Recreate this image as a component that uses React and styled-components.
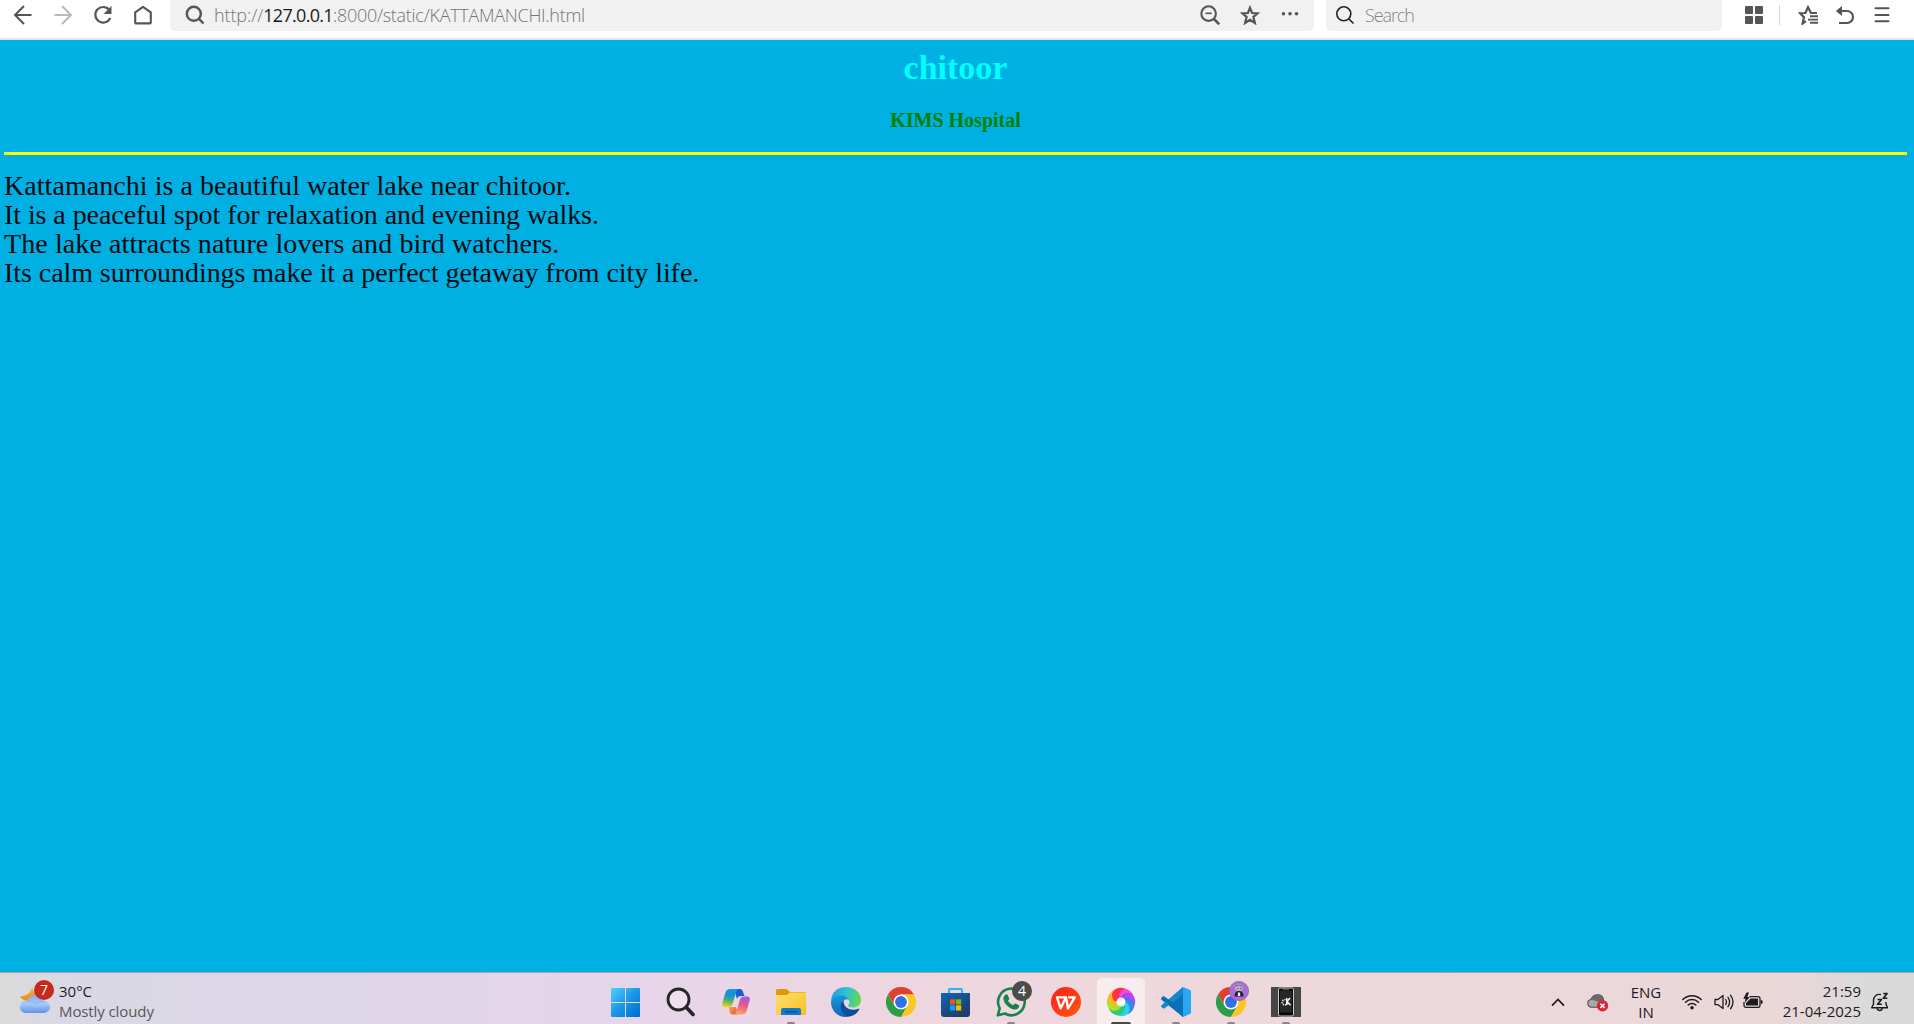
import React from "react";
import styled, { createGlobalStyle } from "styled-components";

const GlobalStyle = createGlobalStyle`
  * { box-sizing: border-box; }
  html, body { margin: 0; padding: 0; }
  body { overflow: hidden; font-family: "Open Sans", "Noto Sans", sans-serif; }
  svg { display: block; flex: none; }
`;

const Screen = styled.div`
  width: 1914px;
  height: 1024px;
  display: flex;
  flex-direction: column;
  overflow: hidden;
`;

/* Browser toolbar */
const Toolbar = styled.header`
  height: 40px;
  flex: none;
  display: flex;
  align-items: flex-start;
  padding-left: 3px;
  background: #fff;
  border-bottom: 2px solid #dfe5ea;
`;
const ToolButton = styled.div`
  width: ${(p) => p.$w || 40}px;
  height: 30px;
  display: flex;
  align-items: center;
  justify-content: center;
  color: ${(p) => (p.$muted ? "#b9b9b9" : "#555")};
`;
const Field = styled.div`
  width: ${(p) => p.$w}px;
  height: 31px;
  margin-left: ${(p) => p.$ml}px;
  padding-left: ${(p) => p.$pl}px;
  padding-bottom: 2px;
  display: flex;
  align-items: center;
  background: #f1f1f1;
  border-radius: 0 0 5px 5px;
  color: ${(p) => p.$ink || "#555"};
`;
const Address = styled.div`
  flex: 1;
  padding-left: 9px;
  font: 300 18px/24px "Open Sans", "Noto Sans", sans-serif;
  color: #747474;
  white-space: nowrap;
`;
const Part = styled.span`
  letter-spacing: ${(p) => p.$ls}px;
`;
const Host = styled(Part)`
  color: #1c1c1c;
  font-weight: 400;
`;
const SearchHint = styled.div`
  padding-left: 10px;
  font: 300 18px/24px "Open Sans", "Noto Sans", sans-serif;
  letter-spacing: -1.1px;
  color: #858585;
`;
const FieldActions = styled.div`
  display: flex;
  padding-right: 4px;
`;
const Tools = styled.div`
  display: flex;
  margin-left: 14px;
`;
const Separator = styled.div`
  width: 1px;
  height: 20px;
  margin: 5px 9px 0 7px;
  background: #d4d4d4;
`;

/* Page */
const Page = styled.main`
  flex: 1;
  background: #00b0e2;
  padding: 8px 7px 0 4px;
`;
const Title = styled.h1`
  margin: 0;
  font: bold 34px/39px "Liberation Serif", serif;
  color: #00ffff;
  text-align: center;
`;
const Subtitle = styled.h3`
  margin: 22px 0 0;
  font: bold 20px/23px "Liberation Serif", serif;
  color: #008000;
  text-align: center;
`;
const Rule = styled.hr`
  height: 3px;
  margin: 20px 0 16px;
  border: 0;
  background: #ffff00;
`;
const Line = styled.div`
  font: 28px/29px "Liberation Serif", serif;
  letter-spacing: ${(p) => p.$ls}px;
  color: #020a10;
  white-space: nowrap;
`;

/* Taskbar */
const Taskbar = styled.footer`
  height: 52px;
  flex: none;
  display: flex;
  border-top: 1px solid #a5a2ab;
  background: linear-gradient(90deg, #dadadb 0, #dad8e4 70px, #ddd7e8 320px, #e7d5e8 680px, #eed6e0 900px, #eed8dd 1120px, #ecd8da 1500px, #ead7d8 1780px, #dadadb 1870px, #d9d9d9 100%);
  font: 15px/20px "Open Sans", "Noto Sans", sans-serif;
  color: #1c1c1e;
`;
const Weather = styled.div`
  width: 598px;
  flex: none;
  display: flex;
  padding: 8px 0 0 19px;
`;
const WeatherIcon = styled.div`
  position: relative;
  width: 40px;
`;
const TextStack = styled.div`
  display: flex;
  flex-direction: column;
  align-items: flex-start;
  white-space: nowrap;
`;
const Muted = styled.span`
  color: #57565c;
  letter-spacing: -0.1px;
`;
const Apps = styled.div`
  display: flex;
  flex: none;
`;
const AppSlot = styled.div`
  position: relative;
  width: 55px;
  height: 51px;
  padding-top: 5px;
  display: flex;
  flex-direction: column;
  align-items: center;
`;
const Tile = styled.div`
  width: 48px;
  height: 46px;
  padding-top: 9px;
  display: flex;
  justify-content: center;
  border-radius: 5px 5px 0 0;
  background: ${(p) => (p.$active ? "#f7edef" : "transparent")};
`;
const Indicator = styled.div`
  position: absolute;
  bottom: 0;
  width: ${(p) => (p.$active ? 20 : 8)}px;
  height: 2px;
  border-radius: 2px 2px 0 0;
  background: ${(p) => (p.$active ? "#4b4848" : "#8b8385")};
`;
const Badge = styled.div`
  position: absolute;
  left: ${(p) => p.$x}px;
  top: ${(p) => p.$y}px;
  width: 20px;
  height: 20px;
  border-radius: 50%;
  background: ${(p) => p.$bg};
  color: #fff;
  font-size: 14px;
  line-height: 20px;
  text-align: center;
`;
const Tray = styled.div`
  flex: 1;
  display: flex;
  padding: 9px 0 0 225px;
`;
const TrayIcon = styled.div`
  width: ${(p) => p.$w}px;
  height: 40px;
  flex: none;
  display: flex;
  align-items: center;
  justify-content: center;
`;
const Language = styled(TextStack)`
  width: 56px;
  align-items: center;
`;
const Clock = styled(TextStack)`
  width: 93px;
  align-items: flex-end;
  margin-top: -1px;
`;

const Stroke = ({ size = 20, w = 2, children, vb = 20, ...r }) => (
  <svg width={size} height={size} viewBox={`0 0 ${vb} ${vb}`} fill="none" stroke="currentColor" strokeWidth={w} {...r}>
    {children}
  </svg>
);

const BackIcon = () => (
  <Stroke><path d="M18.500 10H2.500M11 1L2 10l9 9" /></Stroke>
);
const ForwardIcon = () => (
  <Stroke><path d="M1.500 10h16M9 1l9 9-9 9" /></Stroke>
);
const ReloadIcon = () => (
  <Stroke w={2.2}>
    <path d="M16.200 4.800A7.800 7.800 0 1 0 17.300 13" />
    <path d="M18.500 1v8h-8z" fill="currentColor" stroke="none" />
  </Stroke>
);
const HomeIcon = () => (
  <Stroke w={2.1}><path d="M2.200 7.300L10 1.800l7.800 5.500v10.200q0 .9-.9.9H3.100q-.9 0-.9-.9z" strokeLinejoin="round" /></Stroke>
);
const FindIcon = ({ w = 2.4 }) => (
  <Stroke w={w}><circle cx="8.800" cy="8.800" r="7" /><path d="M13.700 13.700L18.500 18.500" /></Stroke>
);
const ZoomOutIcon = () => (
  <Stroke w={2.1}><circle cx="8.600" cy="8.600" r="7.300" /><path d="M5.500 8.300h6.200" strokeWidth="1.600" /><path d="M14 14l5.200 5.200" strokeWidth="2.600" /></Stroke>
);
const StarIcon = () => (
  <Stroke w={2.2}><path d="M10 2.800l2.100 5.200 5.500.4-4.200 3.600 1.500 6-4.900-3.200L5.100 18l1.500-6-4.200-3.600L7.900 8z" /></Stroke>
);
const DotsIcon = () => (
  <Stroke><g fill="currentColor" stroke="none"><circle cx="3.500" cy="8.800" r="1.800" /><circle cx="10" cy="8.800" r="1.800" /><circle cx="16.500" cy="8.800" r="1.800" /></g></Stroke>
);
const GridIcon = () => (
  <Stroke><g fill="currentColor" stroke="none"><rect x="1" y="1" width="8" height="8" rx="1" /><rect x="11" y="1" width="8" height="8" rx="1" /><rect x="1" y="11" width="8" height="8" rx="1" /><rect x="11" y="11" width="8" height="8" rx="1" /></g></Stroke>
);
const StarListIcon = () => (
  <Stroke w={2.2}>
    <path d="M19 8h-6L10 2.200 7.400 8 2 8.200l4 4-1.400 6.300 3.400-2.300" />
    <path d="M12 11.300h8M10 14.600h10M12 17.700h8" strokeWidth="1.900" />
  </Stroke>
);
const UndoIcon = () => (
  <Stroke w={2.2}><path d="M5 6h7a5.700 5.700 0 0 1 0 12H4" /><path d="M7 1v10L.8 6z" fill="currentColor" stroke="none" /></Stroke>
);
const MenuIcon = () => (
  <Stroke w={2} strokeLinecap="round"><path d="M3.500 3.200h13M3.500 10h13M3.500 16.300h13" /></Stroke>
);

const WeatherArt = () => (
  <svg width="32" height="32" viewBox="0 0 32 32">
    <defs>
      <linearGradient id="moon" x1="0" y1="0" x2="0" y2="1"><stop offset="0" stopColor="#f9b63a" /><stop offset="1" stopColor="#ee8b22" /></linearGradient>
      <linearGradient id="cloud" x1="0" y1="0" x2="0" y2="1"><stop offset="0" stopColor="#82aef0" /><stop offset=".5" stopColor="#a8caf9" /><stop offset="1" stopColor="#5f92e8" /></linearGradient>
    </defs>
    <path d="M13.500 4.500C13 10 9 15 1 15.500c3 6 15 6 19-2C15 12 13 9 13.500 4.500z" fill="url(#moon)" />
    <path d="M8 32h16c4 0 7-2.500 7-6s-3-6-6-6c-1-4-4-6-8-6s-7 2-8 5.500c-5-.5-8 2.500-8 6.500S4 32 8 32z" fill="url(#cloud)" />
    <path d="M8 20c4-.5 7 1 8 3 2-2 6-3 9-2" stroke="#79a6ee" fill="none" opacity=".7" />
  </svg>
);

const Art = ({ children, vb = "0 0 30 30" }) => (
  <svg width="30" height="30" viewBox={vb}>{children}</svg>
);
const WindowsArt = () => (
  <Art vb="2 0 30 30">
    <defs><linearGradient id="win" gradientUnits="userSpaceOnUse" x1="1" y1="1" x2="29" y2="29"><stop offset="0" stopColor="#52d3ff" /><stop offset=".5" stopColor="#1c9be6" /><stop offset="1" stopColor="#006fd0" /></linearGradient></defs>
    <path fill="url(#win)" d="M3 1h13v14H2V2q0-1 1-1zM17 1h13q1 0 1 1v13H17zM2 16h14v14H3q-1 0-1-1zM17 16h14v13q0 1-1 1H17z" />
  </Art>
);
const SearchArt = () => (
  <Art>
    <g transform="translate(.500 0)">
      <circle cx="12" cy="12.500" r="10.500" fill="#f3e8f1" fillOpacity=".6" stroke="#262629" strokeWidth="2.800" />
      <path d="M20 20.500l6.500 7" stroke="#262629" strokeWidth="3.600" strokeLinecap="round" />
    </g>
  </Art>
);
const CopilotArt = () => (
  <Art>
    <defs>
      <linearGradient id="cpA" x1=".5" y1="0" x2=".3" y2="1"><stop offset="0" stopColor="#1696dc" /><stop offset=".35" stopColor="#1a8ed6" /><stop offset=".62" stopColor="#46b072" /><stop offset="1" stopColor="#f4d319" /></linearGradient>
      <linearGradient id="cpB" x1=".6" y1="0" x2=".4" y2="1"><stop offset="0" stopColor="#a05be8" /><stop offset=".45" stopColor="#e4568e" /><stop offset="1" stopColor="#ffa35c" /></linearGradient>
      <linearGradient id="cpC" x1="0" y1="0" x2="1" y2="1"><stop offset="0" stopColor="#1c4fc8" /><stop offset="1" stopColor="#2267dc" /></linearGradient>
      <linearGradient id="cpD" x1="0" y1="0" x2="1" y2="1"><stop offset="0" stopColor="#f6a63a" /><stop offset="1" stopColor="#ea4c4c" /></linearGradient>
    </defs>
    <path d="M13 2h6q2 0 2.700 2L23.500 9H20q-3 0-4 3z" fill="url(#cpC)" />
    <path d="M8 20h7l2 7.500H12q-2.500 0-3.200-2z" fill="url(#cpD)" />
    <path d="M9 2h8.500q-2 1-3 5l-3 10q-1 3-4 3H4Q.5 20 1.300 16L4.500 5.500Q5.500 2 9 2z" fill="url(#cpA)" />
    <path d="M21 27.500H13q2-1 3-5l3-10q1-3 4-3h3q3.500 0 2.700 4L25.500 24q-1 3.500-4.500 3.500z" fill="url(#cpB)" />
  </Art>
);
const FolderArt = () => (
  <Art>
    <defs><linearGradient id="fold" x1="0" y1="0" x2="1" y2="1"><stop offset="0" stopColor="#ffdf6e" /><stop offset="1" stopColor="#f9be22" /></linearGradient></defs>
    <path d="M1.500 2H10q1 0 1.800 1L14 5h15q1 0 1 1v8H0V3.500Q0 2 1.500 2z" fill="#dd9a08" />
    <path d="M0 8h10q1.500 0 2.500-1.500L14 5.500h16V28H0z" fill="url(#fold)" />
    <path d="M5 28v-5q0-2 2-2h16q2 0 2 2v5z" fill="#1279cb" />
    <path d="M9 24.800h12" stroke="#06457f" strokeWidth="1.200" />
  </Art>
);
const EdgeArt = () => (
  <Art>
    <defs>
      <linearGradient id="edA" x1="0" y1=".3" x2="1" y2=".5"><stop offset="0" stopColor="#1c9fe0" /><stop offset=".5" stopColor="#31c4d2" /><stop offset="1" stopColor="#66d84c" /></linearGradient>
      <linearGradient id="edB" x1="0" y1="0" x2="0" y2="1"><stop offset="0" stopColor="#1b96d9" /><stop offset="1" stopColor="#1066bd" /></linearGradient>
    </defs>
    <path d="M0 15C0 5 7 0 15 0c9 0 15 6 15 13 0 5-4 7.500-8 7.500-3 0-5-1-5-2 0-.8 1.500-1.200 1.500-3.500 0-3-3-6-8-6C5 9 1 12 0 15z" fill="url(#edA)" />
    <path d="M0 15C1 11 5 8.500 10 8.500c4 0 7.500 2 8.300 5C15 10 11.500 14 11.500 18c0 5 4.500 9 9 9-2 2-4 3-6 3C6 30 0 23 0 15z" fill="url(#edB)" />
    <path d="M12.500 14C9.500 16 9 20 10.500 23.500 12 27 15.500 30 18 29.600c4.500-.6 8.500-3.600 10.200-7.200.3-.7-.2-1-.8-.7-6 2.600-14.900.3-14.900-7.700z" fill="#0c4f98" />
  </Art>
);
const ChromeArt = () => (
  <Art>
    <path d="M2 7.500A15 15 0 0 1 28 7.500H15L8.500 18.750z" fill="#df4032" />
    <path d="M2 7.500A15 15 0 0 0 15 30l6.500-11.250H8.500z" fill="#2c9e48" />
    <path d="M28 7.500A15 15 0 0 1 15 30l6.500-11.250L15 7.500z" fill="#fcc624" />
    <circle cx="15" cy="15" r="7.500" fill="#fff" />
    <circle cx="15" cy="15" r="5.900" fill="#2f70e4" />
  </Art>
);
const StoreArt = () => (
  <Art vb="1 0 30 30">
    <defs><linearGradient id="store" x1="0" y1="0" x2=".7" y2="1"><stop offset="0" stopColor="#0b68b8" /><stop offset="1" stopColor="#233a66" /></linearGradient></defs>
    <path d="M9 7V3q0-1 1-1h11q1 0 1 1v4" fill="none" stroke="#2ab4ee" strokeWidth="2" />
    <path d="M1 6h29v21q0 3-3 3H4q-3 0-3-3z" fill="url(#store)" />
    <path d="M10 12.300h5.200v5.200H10z" fill="#f25022" /><path d="M16 12.300h5.200v5.200H16z" fill="#7fba00" />
    <path d="M10 18.300h5.200v5.200H10z" fill="#00a4ef" /><path d="M16 18.300h5.200v5.200H16z" fill="#ffb900" />
  </Art>
);
const WhatsAppArt = () => (
  <Art>
    <path d="M1.800 28.300l1.900-7A13.300 13.300 0 1 1 8.800 26.500z" fill="none" stroke="#18834f" strokeWidth="2.600" strokeLinejoin="round" />
    <path d="M9 8q1.500-1.300 2.700 0l1.500 3.400q.2 1-1.300 2.300 1.800 3.200 5.200 4.600 1.500-2 2.300-1.800l3.200 1.600q1 .7.200 2.400-1.500 2.500-4.500 2-4.500-.7-8-4.700C6.500 13.500 7 10 9 8z" fill="#18834f" />
  </Art>
);
const WpsArt = () => (
  <Art>
    <defs><linearGradient id="wps" x1="0" y1="0" x2="1" y2="1"><stop offset="0" stopColor="#ff1d1d" /><stop offset="1" stopColor="#ff5a10" /></linearGradient></defs>
    <circle cx="15" cy="15" r="15" fill="url(#wps)" />
    <path d="M13.500 10.300H6l3.600 11.200 5.400-11.200 2 11.200 6.800-11.200H18" fill="none" stroke="#fff" strokeWidth="2.300" strokeLinejoin="round" strokeLinecap="round" />
  </Art>
);
const swirl = ["#ff243c", "#ff38c8", "#a63cf4", "#2c7cf0", "#20cfe8", "#20c868", "#a8e020", "#ffb414"];
const order = [1, 2, 3, 4, 5, 6, 7, 0];
const SwirlArt = () => (
  <Art>
    <defs><filter id="soft"><feGaussianBlur stdDeviation=".55" /></filter></defs>
    <g filter="url(#soft)">
      {order.map((c, i) => (
        <path key={i} transform={`rotate(${i * 45} 15 15)`} d="M11 11C11 5 15 .8 20 2c4 1 6.500 4 7.500 7C23 5.500 19 7 17.500 10.500z" fill={swirl[c]} fillOpacity=".92" />
      ))}
    </g>
    <circle cx="15" cy="15" r="4.300" fill="#fff" filter="url(#soft)" />
  </Art>
);
const VsCodeArt = () => (
  <Art>
    <path d="M22 0L7.800 13 3.500 9.700q-1-.7-1.800 0L.5 10.800q-.8.900 0 1.900L22 30z" fill="#0871b8" />
    <path d="M22 0L.5 18.200q-.8 1 0 1.900l1.200 1.100q.8.700 1.800 0L22 8z" fill="#1287cf" />
    <path d="M.5 10.800l1.200-1.100q.8-.7 1.800 0L22 22.500V30z" fill="#0871b8" />
    <path d="M22 0l7 3q1 .5 1 1.700v20.600q0 1.200-1 1.700l-7 3z" fill="#29a8ef" />
  </Art>
);
const PhoneArt = () => (
  <Art>
    <path d="M0 0h30v30H0z" fill="#464747" />
    <rect x="7.500" y="1" width="15" height="28" rx="1.500" fill="#090909" stroke="#c9c9c9" strokeWidth="1" />
    <path d="M9 3.500h12v22H9z" fill="#262727" />
    <path d="M12 2.300h6" stroke="#999" strokeWidth=".7" />
    <circle cx="13.800" cy="15.300" r="2.600" fill="none" stroke="#ddd" strokeWidth="1.600" strokeDasharray="1.400 .9" />
    <path d="M15.800 11v7M19 11l-3 3.500 3.500 3.800" fill="none" stroke="#fff" strokeWidth="1.500" />
  </Art>
);
const Avatar = styled.div`
  position: absolute;
  left: 26px;
  top: 8px;
`;
const AvatarArt = () => (
  <svg width="20" height="20" viewBox="0 0 20 20">
    <circle cx="10" cy="10" r="9.600" fill="#ad6bdc" stroke="#8c68a5" strokeWidth=".8" />
    <path d="M5.500 15.500q0-5.500 4.500-5.500t4.500 5.500z" fill="#211c25" />
    <ellipse cx="9.800" cy="6.500" rx="4" ry="3.600" fill="#b9b2bc" />
    <path d="M6.500 5.500q3-3 6.500 0M8 7.500h1.500M11 7.500h1.500" stroke="#6a636e" strokeWidth="1.100" fill="none" />
    <path d="M8.800 11.500h2.400v3.500H8.800z" fill="#eee" />
  </svg>
);

const ChevronIcon = () => (
  <Stroke w={1.7} strokeLinecap="round"><path d="M4.500 13.200L10 7.400l5.500 5.800" /></Stroke>
);
const CloudErrorIcon = () => (
  <svg width="22" height="20" viewBox="0 0 22 20">
    <path d="M5 15.200C1.800 15.200.8 13 .8 11.200c0-2 1.500-3.500 3.200-3.700C5 5 7.500 2.800 10.500 2.800c3 0 5.500 2 6 5 0 4-2 7.400-6 7.400z" fill="#aaa7a8" stroke="#4f4d4e" strokeWidth="1.100" />
    <path d="M4 7.500C5 5 7.500 2.800 10.500 2.800c3 0 5.500 2 6 5l-5 2z" fill="#6b696a" />
    <circle cx="15.500" cy="13.800" r="5.700" fill="#dc2633" />
    <path d="M13.400 11.700l4.200 4.200M17.600 11.700l-4.200 4.200" stroke="#fff" strokeWidth="1.500" />
  </svg>
);
const WifiIcon = () => (
  <Stroke w={1.5} strokeLinecap="round">
    <path d="M.8 7.500a13 13 0 0 1 18.400 0M3.500 10.300a9.200 9.200 0 0 1 13 0M6.200 13a5.400 5.400 0 0 1 7.600 0" />
    <circle cx="10" cy="15.800" r="1.800" fill="currentColor" stroke="none" />
  </Stroke>
);
const VolumeIcon = () => (
  <Stroke w={1.300} strokeLinecap="round" strokeLinejoin="round">
    <path d="M1 7.500h3L9 3.500v13L4 12.700H1z" />
    <path d="M11.700 7.500q1.500 2.500 0 5M14 5.300q3.200 4.700 0 9.400M16.500 3.200q5 6.800 0 13.600" />
  </Stroke>
);
const BatteryIcon = () => (
  <Stroke w={1.300}>
    <path d="M6.500 4.700H15q2 0 2 2v6.600q0 2-2 2H3q-2 0-2-2V10" />
    <path d="M7.500 6.500H15v7H3V11z" fill="currentColor" stroke="none" />
    <path d="M17.800 8q2 0 2 2t-2 2z" fill="currentColor" stroke="none" />
    <path d="M3.500.5L.3 6.700h2.200L1.700 11l5-6H4.300L6 .5z" fill="currentColor" stroke="none" />
  </Stroke>
);
const BellIcon = () => (
  <Stroke w={1.400} strokeLinejoin="round">
    <path d="M11 2.600C6.500 1.600 3.500 4.500 3.500 8.500V12l-1.800 3.800h15.800L16 12V10" />
    <path d="M7 16q.5 2.500 2.700 2.500T12.500 16" />
    <path d="M7.500 7.500h4L7.500 12.300h4.300M13.300 1.500h3.800l-3.800 4.800h4" strokeWidth="1.600" />
  </Stroke>
);

const apps = [
  { id: "start", art: <WindowsArt /> },
  { id: "search", art: <SearchArt /> },
  { id: "copilot", art: <CopilotArt /> },
  { id: "files", art: <FolderArt />, open: true },
  { id: "edge", art: <EdgeArt /> },
  { id: "chrome", art: <ChromeArt /> },
  { id: "store", art: <StoreArt /> },
  { id: "whatsapp", art: <WhatsAppArt />, open: true, badge: 4 },
  { id: "wps", art: <WpsArt /> },
  { id: "browser", art: <SwirlArt />, open: true, active: true },
  { id: "code", art: <VsCodeArt />, open: true },
  { id: "profile", art: <ChromeArt />, open: true, avatar: true },
  { id: "phone", art: <PhoneArt />, open: true },
];

const lines = [
  { text: "Kattamanchi is a beautiful water lake near chitoor.", ls: 0.05 },
  { text: "It is a peaceful spot for relaxation and evening walks.", ls: -0.07 },
  { text: "The lake attracts nature lovers and bird watchers.", ls: 0.1 },
  { text: "Its calm surroundings make it a perfect getaway from city life.", ls: -0.06 },
];

export default function App() {
  return (
    <Screen>
      <GlobalStyle />
      <Toolbar>
        <ToolButton><BackIcon /></ToolButton>
        <ToolButton $muted><ForwardIcon /></ToolButton>
        <ToolButton><ReloadIcon /></ToolButton>
        <ToolButton><HomeIcon /></ToolButton>
        <Field $w={1144} $ml={7} $pl={15}>
          <FindIcon />
          <Address>
            <Part $ls={-0.1}>http://</Part>
            <Host $ls={-0.7}>127.0.0.1</Host>
            <Part $ls={-0.28}>:8000/static/KATTAMANCHI.html</Part>
          </Address>
          <FieldActions>
            <ToolButton><ZoomOutIcon /></ToolButton>
            <ToolButton><StarIcon /></ToolButton>
            <ToolButton><DotsIcon /></ToolButton>
          </FieldActions>
        </Field>
        <Field $w={396} $ml={12} $pl={9} $ink="#222">
          <FindIcon w={1.6} />
          <SearchHint>Search</SearchHint>
        </Field>
        <Tools>
          <ToolButton $w={36}><GridIcon /></ToolButton>
          <Separator />
          <ToolButton $w={37}><StarListIcon /></ToolButton>
          <ToolButton $w={37}><UndoIcon /></ToolButton>
          <ToolButton $w={37}><MenuIcon /></ToolButton>
        </Tools>
      </Toolbar>

      <Page>
        <Title>chitoor</Title>
        <Subtitle>KIMS Hospital</Subtitle>
        <Rule />
        {lines.map((l) => (
          <Line key={l.text} $ls={l.ls}>{l.text}</Line>
        ))}
      </Page>

      <Taskbar>
        <Weather>
          <WeatherIcon>
            <WeatherArt />
            <Badge $x={15} $y={-1} $bg="#c42b1c">7</Badge>
          </WeatherIcon>
          <TextStack>
            <span>30°C</span>
            <Muted>Mostly cloudy</Muted>
          </TextStack>
        </Weather>
        <Apps>
          {apps.map((a) => (
            <AppSlot key={a.id}>
              <Tile $active={a.active}>{a.art}</Tile>
              {a.badge && <Badge $x={29} $y={8} $bg="#4a4b4b">{a.badge}</Badge>}
              {a.avatar && <Avatar><AvatarArt /></Avatar>}
              {a.open && <Indicator $active={a.active} />}
            </AppSlot>
          ))}
        </Apps>
        <Tray>
          <TrayIcon $w={40}><ChevronIcon /></TrayIcon>
          <TrayIcon $w={40}><CloudErrorIcon /></TrayIcon>
          <Language><span>ENG</span><span>IN</span></Language>
          <TrayIcon $w={36}><WifiIcon /></TrayIcon>
          <TrayIcon $w={28}><VolumeIcon /></TrayIcon>
          <TrayIcon $w={30}><BatteryIcon /></TrayIcon>
          <Clock><span>21:59</span><span>21-04-2025</span></Clock>
          <TrayIcon $w={38}><BellIcon /></TrayIcon>
        </Tray>
      </Taskbar>
    </Screen>
  );
}
